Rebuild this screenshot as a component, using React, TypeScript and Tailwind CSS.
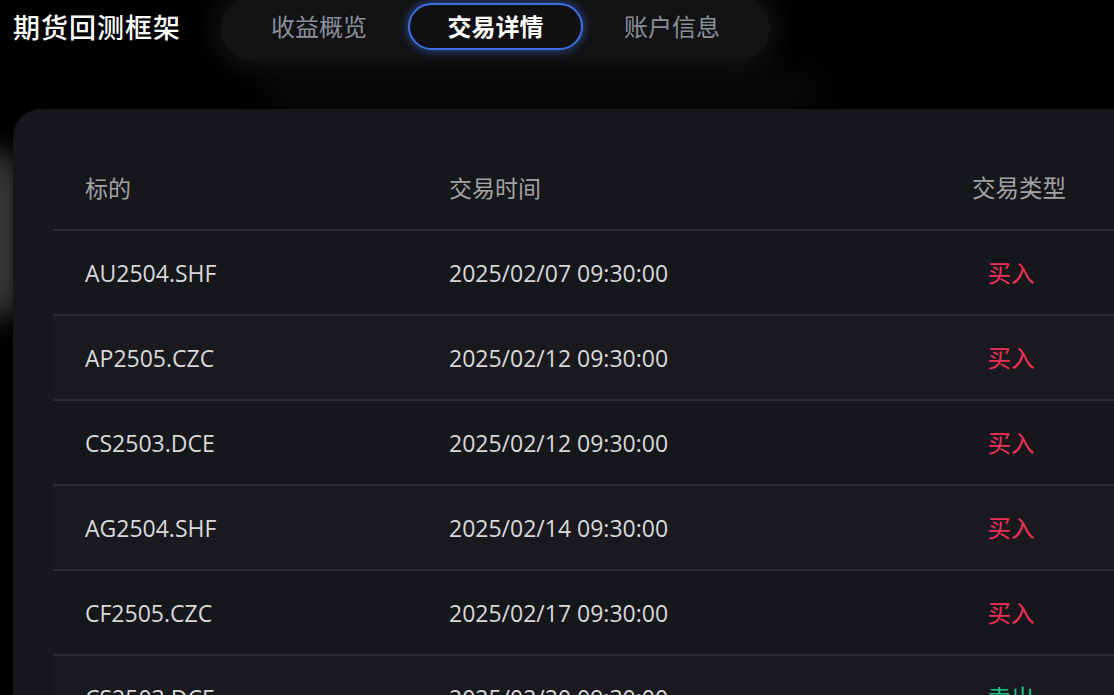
import { useState } from 'react'

type Trade = { symbol: string; time: string; side: 'buy' | 'sell' }

const trades: Trade[] = [
  { symbol: 'AU2504.SHF', time: '2025/02/07 09:30:00', side: 'buy' },
  { symbol: 'AP2505.CZC', time: '2025/02/12 09:30:00', side: 'buy' },
  { symbol: 'CS2503.DCE', time: '2025/02/12 09:30:00', side: 'buy' },
  { symbol: 'AG2504.SHF', time: '2025/02/14 09:30:00', side: 'buy' },
  { symbol: 'CF2505.CZC', time: '2025/02/17 09:30:00', side: 'buy' },
  { symbol: 'CS2503.DCE', time: '2025/02/20 09:30:00', side: 'sell' },
]

const tabs = ['收益概览', '交易详情', '账户信息']

export default function App() {
  const [active, setActive] = useState(1)

  return (
    <div
      className="relative h-[695px] w-[1114px] overflow-hidden bg-black"
      style={{ fontFamily: '"Open Sans", "Noto Sans CJK SC", sans-serif' }}
    >
      {/* blurred backdrop glow behind the card */}
      <div className="absolute -left-[40px] top-[150px] h-[170px] w-[60px] rounded-full bg-[#3a3a3a] blur-[14px]" />
      <div className="absolute left-[260px] top-[72px] h-[36px] w-[560px] rounded-full bg-[#0a0a0a] blur-[16px]" />

      <header className="relative flex items-start">
        <h1 className="ml-[13px] mt-[9px] text-[27px] font-medium leading-[38px] tracking-[1px] text-white">
          期货回测框架
        </h1>
        <nav className="ml-[40px] -mt-[4px] flex items-center gap-[41px] rounded-full bg-[#131315] pb-[11px] pl-[50px] pr-[50px] pt-[7px] shadow-[0_0_24px_10px_rgba(20,20,22,0.9)]">
          {tabs.map((t, i) =>
            i === active ? (
              <button
                key={t}
                onClick={() => setActive(i)}
                className="h-[47px] w-[175px] rounded-full border-2 border-[#3d6fe3] bg-[#111113] text-[24px] font-bold text-white shadow-[0_0_8px_1px_rgba(61,111,227,0.55)]"
              >
                {t}
              </button>
            ) : (
              <button key={t} onClick={() => setActive(i)} className="text-[24px] text-[#8a909c]">
                {t}
              </button>
            ),
          )}
        </nav>
      </header>

      <main className="relative ml-[13px] mt-[48px] w-[1200px] rounded-[28px] bg-[#16171b] px-[40px] pt-[37px]">
        <div className="grid grid-cols-[364px_480px_244px_1fr] border-b-2 border-[#2c2c2f] text-[23px] text-[#a3a3a6]">
          <div className="flex h-[83px] items-center pl-8 pt-[2px]">标的</div>
          <div className="flex h-[83px] items-center pl-8 pt-[2px]">交易时间</div>
          <div className="flex h-[83px] items-center justify-center pt-[2px] text-[23.5px]">交易类型</div>
          <div />
        </div>
        {trades.map((r, i) => (
          <div
            key={i}
            className={`grid h-[85px] grid-cols-[364px_480px_244px_1fr] border-b-2 border-[#2c2c2f] pt-[2px] text-[23px] text-[#d9d9db] ${
              i % 2 === 1 ? 'bg-[#1a1a1e]' : 'bg-[#16171b]'
            }`}
          >
            <div className="flex items-center pl-8">{r.symbol}</div>
            <div className="flex items-center pl-8">{r.time}</div>
            <div
              className={`flex items-center justify-center pr-4 text-[23.5px] ${
                r.side === 'buy' ? 'text-[#f0305a]' : 'text-[#1fbf86]'
              }`}
            >
              {r.side === 'buy' ? '买入' : '卖出'}
            </div>
            <div />
          </div>
        ))}
      </main>
    </div>
  )
}
